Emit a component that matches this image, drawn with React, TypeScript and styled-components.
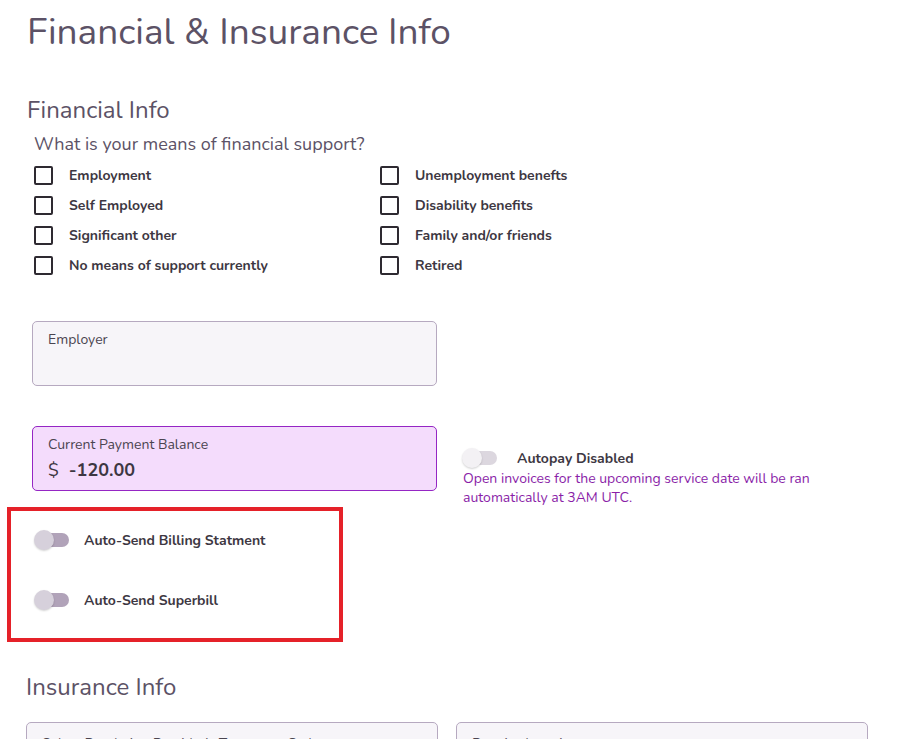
import styled, { createGlobalStyle } from 'styled-components';

const GlobalStyle = createGlobalStyle`
  body {
    margin: 0;
    background: #ffffff;
    font-family: Nunito, "Noto Sans", Lato, sans-serif;
    color: #3d3742;
  }
`;

const supportOptions = [
  'Employment',
  'Unemployment benefts',
  'Self Employed',
  'Disability benefits',
  'Significant other',
  'Family and/or friends',
  'No means of support currently',
  'Retired',
];

export default function App() {
  return (
    <>
      <GlobalStyle />
      <Page>
        <Title>Financial &amp; Insurance Info</Title>

        <SectionTitle>Financial Info</SectionTitle>
        <Question>What is your means of financial support?</Question>
        <CheckGrid>
          {supportOptions.map((label) => (
            <CheckRow key={label}>
              <Box />
              <CheckLabel>{label}</CheckLabel>
            </CheckRow>
          ))}
        </CheckGrid>

        <Field>
          <FieldLabel>Employer</FieldLabel>
        </Field>

        <BalanceRow>
          <Field $highlight>
            <FieldLabel>Current Payment Balance</FieldLabel>
            <Amount>
              <Currency>$</Currency>
              <Value>-120.00</Value>
            </Amount>
          </Field>
          <Autopay>
            <ToggleRow $gap={20}>
              <Toggle $faded />
              <ToggleLabel>Autopay Disabled</ToggleLabel>
            </ToggleRow>
            <Note>
              Open invoices for the upcoming service date will be ran
              <br />
              automatically at 3AM UTC.
            </Note>
          </Autopay>
        </BalanceRow>

        <Marked>
          <ToggleRow $gap={15}>
            <Toggle />
            <ToggleLabel>Auto-Send Billing Statment</ToggleLabel>
          </ToggleRow>
          <ToggleRow $gap={15}>
            <Toggle />
            <ToggleLabel>Auto-Send Superbill</ToggleLabel>
          </ToggleRow>
        </Marked>

        <SectionTitle $insurance>Insurance Info</SectionTitle>
        <InsuranceRow>
          <Field $short>
            <FieldLabel>Select Rendering Provider's Taxonomy Code</FieldLabel>
          </Field>
          <Field $short>
            <FieldLabel>Practice Location</FieldLabel>
          </Field>
        </InsuranceRow>
      </Page>
    </>
  );
}

const Page = styled.div`
  height: 739px;
  overflow: hidden;
  box-sizing: border-box;
  padding: 10px 0 0 26px;
  display: flex;
  flex-direction: column;
  align-items: flex-start;
`;

const Title = styled.h1`
  margin: 0 0 0 1px;
  font-size: 37px;
  font-weight: 400;
  line-height: 44px;
  color: #5c5266;
`;

const SectionTitle = styled.h2<{ $insurance?: boolean }>`
  margin: ${(p) => (p.$insurance ? '30px 0 0 0' : '41px 0 0 1px')};
  font-size: 24px;
  font-weight: 400;
  line-height: 30px;
  color: #5c5266;
`;

const Question = styled.div`
  margin: 7px 0 0 8px;
  font-size: 18px;
  line-height: 24px;
  color: #5c5266;
`;

const CheckGrid = styled.div`
  margin: 4px 0 0 8px;
  display: grid;
  grid-template-columns: 346px 300px;
  grid-auto-rows: 30px;
`;

const CheckRow = styled.div`
  display: flex;
  align-items: center;
  gap: 16px;
`;

const Box = styled.span`
  width: 15px;
  height: 15px;
  border: 2px solid #2e2a31;
  border-radius: 2px;
`;

const CheckLabel = styled.span`
  font-size: 14px;
  font-weight: 700;
  color: #3d3742;
`;

const Field = styled.div<{ $highlight?: boolean; $short?: boolean }>`
  box-sizing: border-box;
  flex-shrink: 0;
  width: ${(p) => (p.$short ? '412px' : '405px')};
  height: 65px;
  margin-left: ${(p) => (p.$short ? '0' : '6px')};
  padding: ${(p) => (p.$short ? '12px' : '9px')} 15px 0;
  border-radius: 5px;
  border: 1px solid ${(p) => (p.$highlight ? '#9526c4' : '#b6a9c0')};
  background: ${(p) => (p.$highlight ? '#f4dcfc' : '#f7f5f9')};
  ${(p) => !p.$highlight && !p.$short && 'margin-top: 41px;'}
`;

const FieldLabel = styled.div`
  font-size: 14px;
  line-height: 18px;
  color: #4a4450;
`;

const Amount = styled.div`
  display: flex;
  align-items: baseline;
  gap: 10px;
  margin-top: 4px;
`;

const Currency = styled.span`
  font-size: 18px;
  color: #3d3742;
`;

const Value = styled.span`
  font-size: 18px;
  font-weight: 700;
  color: #3d3742;
`;

const BalanceRow = styled.div`
  display: flex;
  align-items: flex-start;
  gap: 26px;
  margin-top: 40px;
`;

const Autopay = styled.div`
  margin-top: 22px;
  display: flex;
  flex-direction: column;
`;

const ToggleRow = styled.div<{ $gap: number }>`
  display: flex;
  align-items: center;
  gap: ${(p) => p.$gap}px;
  height: 20px;
`;

const Toggle = styled.span<{ $faded?: boolean }>`
  position: relative;
  width: 34px;
  height: 14px;
  border-radius: 7px;
  background: ${(p) => (p.$faded ? '#dcd7df' : '#b1a3b9')};

  &::after {
    content: '';
    position: absolute;
    left: -1px;
    top: -3px;
    width: 20px;
    height: 20px;
    border-radius: 50%;
    background: ${(p) => (p.$faded ? '#f3f1f4' : '#d6d0db')};
    box-shadow: 0 1px 2px rgba(0, 0, 0, 0.18);
  }
`;

const ToggleLabel = styled.span`
  font-size: 14px;
  font-weight: 700;
  color: #3d3742;
`;

const Note = styled.div`
  margin-top: 1px;
  font-size: 14px;
  line-height: 19px;
  color: #8a1ea8;
`;

const Marked = styled.div`
  box-sizing: border-box;
  width: 336px;
  margin: 0 0 0 -19px;
  padding: 19px 0 28px 24px;
  border: 4px solid #e52129;
  display: flex;
  flex-direction: column;
  gap: 40px;
`;

const InsuranceRow = styled.div`
  display: flex;
  gap: 18px;
  margin-top: 20px;
`;
